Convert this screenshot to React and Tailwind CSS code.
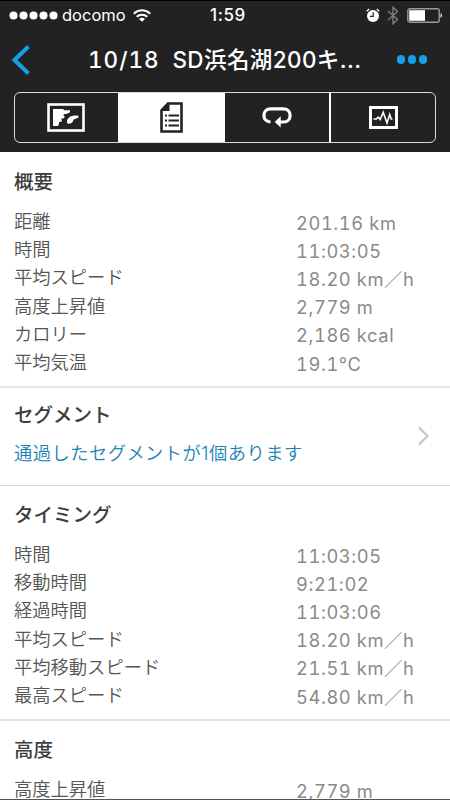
import clsx from "clsx";

const SUMMARY = [
  ["距離", "201.16 km"],
  ["時間", "11:03:05"],
  ["平均スピード", "18.20 km／h"],
  ["高度上昇値", "2,779 m"],
  ["カロリー", "2,186 kcal"],
  ["平均気温", "19.1°C"],
];

const TIMING = [
  ["時間", "11:03:05"],
  ["移動時間", "9:21:02"],
  ["経過時間", "11:03:06"],
  ["平均スピード", "18.20 km／h"],
  ["平均移動スピード", "21.51 km／h"],
  ["最高スピード", "54.80 km／h"],
];

const ELEVATION = [["高度上昇値", "2,779 m"]];

const MapIcon = () => (
  <svg width="38" height="29" viewBox="0 0 38 29">
    <rect x="1.5" y="1.5" width="35" height="26" fill="none" stroke="#fff" strokeWidth="2.6" />
    <path d="M6 6h10l1.5 1.2H23v2l-3 1.5-3 .5-.6 1.2 1.4 1.3-1 1.5-2.8.5 1 1.6-.7 1.4-2.3.3v1.700L11 23H6z" fill="#fff" />
    <path d="M31.300 12.500v2.200l-4.500 1.800-1.700 3.200-3.700 1.300-1.600-1.500.5-3 2.800-2.900 4-1.100z" fill="#fff" />
  </svg>
);

const DocIcon = () => (
  <svg width="23" height="31" viewBox="0 0 23 31">
    <path d="M1.500 8.500L8 1.500h13.500v28h-20z" fill="#fff" stroke="#222" strokeWidth="2.600" />
    <path d="M1 8L8 1h1.500v8H1z" fill="#222" />
    <path d="M5 13.500h2M8.500 13.500H19M5 18.500h2M8.500 18.500H19M5 23.500h2M8.500 23.500H19" stroke="#222" strokeWidth="2.200" />
  </svg>
);

const LoopIcon = () => (
  <svg width="30" height="21" viewBox="0 0 30 21">
    <path d="M8.500 15C4.500 14.700 1.900 12 1.900 8.400c0-3.800 2.800-6.500 6.800-6.500h12.600c4 0 6.800 2.700 6.800 6.500s-2.600 6.600-6.500 6.600H18" fill="none" stroke="#fff" strokeWidth="3.200" />
    <path d="M18.700 9.200v11.300L12.700 15z" fill="#fff" />
  </svg>
);

const GraphIcon = () => (
  <svg width="29" height="23" viewBox="0 0 29 23">
    <rect x="1.500" y="1.500" width="26" height="20" fill="none" stroke="#fff" strokeWidth="3" />
    <path d="M4.500 13h2.800l1.900-1.800 2 2.300 3-7.200 3.800 10.700 2.700-8.500 1.500 4.500h1.300" fill="none" stroke="#fff" strokeWidth="1.600" />
  </svg>
);

const TABS = [MapIcon, DocIcon, LoopIcon, GraphIcon];

function StatusBar() {
  return (
    <div className="flex h-[30px] items-center border-t border-black pl-[9px] pr-[7px] text-white">
      <div className="flex w-[201px] items-center">
        <div className="flex gap-[0.5px]">
          {[0, 1, 2, 3, 4].map((i) => (
            <span key={i} className="size-[9.4px] scale-90 rounded-full bg-white" />
          ))}
        </div>
        <span className="ml-[4px] text-[16.5px] leading-none">docomo</span>
        <svg className="ml-[7px]" width="18" height="13" viewBox="0 0 18 13">
          <g fill="none" stroke="#fff" strokeWidth="2">
            <path d="M.8 4.700C5.500.1 12.500.1 17.200 4.700" />
            <path d="M3.700 7.800c3-2.900 7.600-2.900 10.600 0" />
          </g>
          <path d="M9 12.800L6 9.900c1.700-1.500 4.300-1.500 6 0z" fill="#fff" />
        </svg>
      </div>
      <span className="text-[17px] font-medium leading-none tracking-[0.6px]">1:59</span>
      <div className="ml-auto flex items-center">
        <svg width="14" height="15" viewBox="0 0 14 15">
          <circle cx="7" cy="8" r="6" fill="#fff" />
          <path d="M.7 3.300L3.200 1M13.300 3.300L10.800 1" stroke="#fff" strokeWidth="1.200" />
          <path d="M7.200 4.300V8.300H4" fill="none" stroke="#222" strokeWidth="1.200" />
        </svg>
        <svg className="ml-[7px]" width="12" height="19" viewBox="0 0 12 19">
          <path d="M1 5l9.500 8.500L6 17.800V1.200l4.500 4.300L1 14" fill="none" stroke="#7d7d7d" strokeWidth="1.400" />
        </svg>
        <svg className="ml-[8px]" width="36" height="15" viewBox="0 0 36 15">
          <rect x=".8" y=".8" width="31.400" height="13.400" rx="2" fill="none" stroke="#999" strokeWidth="1.400" />
          <rect x="2.200" y="2.200" width="15.800" height="10.600" fill="#fff" />
          <path d="M33.500 5.200c2 .4 2 4.200 0 4.600z" fill="#ddd" />
        </svg>
      </div>
    </div>
  );
}

function NavBar() {
  return (
    <div className="flex h-[62px] items-center pl-[11px] pr-[23px]">
      <svg className="-mt-[3px]" width="20" height="30" viewBox="0 0 20 30">
        <path d="M17.500 1.500L3.500 15l14 13.500" fill="none" stroke="#12a0e8" strokeWidth="4" />
      </svg>
      <h1 className="-mt-[2px] ml-[57px] flex whitespace-pre text-[22.5px] font-medium leading-none text-white">
        <span className="tabular-nums tracking-[1px]">10/18</span>
        <span className="tracking-[0.4px]">  SD浜名湖200キ...</span>
      </h1>
      <div className="-mt-[4px] ml-auto flex gap-[3px]">
        <span className="h-[9px] w-[8px] rounded-full bg-[#12a0e8]" />
        <span className="h-[9px] w-[8px] rounded-full bg-[#12a0e8]" />
        <span className="h-[9px] w-[8px] rounded-full bg-[#12a0e8]" />
      </div>
    </div>
  );
}

function Rows({ items }) {
  return (
    <dl className="text-[18.3px]">
      {items.map(([label, value]) => (
        <div key={label} className="flex h-[28.2px] items-center leading-[28px]">
          <dt className="w-[282px] font-[350] text-[#555]">{label}</dt>
          <dd className="pt-[3px] tabular-nums tracking-[0.6px] text-[#8a8a8a]">{value}</dd>
        </div>
      ))}
    </dl>
  );
}

const Heading = ({ children }) => (
  <h2 className="text-[19.5px] font-medium leading-7 text-[#3c3c3c]">{children}</h2>
);

export default function App() {
  return (
    <div className="flex h-[800px] w-[450px] flex-col overflow-hidden border-b border-[#555] bg-white font-['Inter','Noto_Sans_CJK_JP',sans-serif] antialiased">
      <header className="h-[152px] shrink-0 bg-[#222]">
        <StatusBar />
        <NavBar />
        <div className="mx-[14px] grid h-[51px] grid-cols-[103px_107px_104px_1fr] overflow-hidden rounded-[6px] border-[1.5px] border-[#ddd]">
          {TABS.map((Icon, i) => (
            <button
              key={i}
              className={clsx(
                "flex items-center justify-center",
                i === 0 && "pr-[2px]",
                i === 1 && "bg-white",
                i === 3 && "border-l-2 border-white"
              )}
            >
              <Icon />
            </button>
          ))}
        </div>
      </header>

      <section className="h-[236px] shrink-0 border-b-2 border-[#e4e4e4] px-[14px] pt-[16px]">
        <Heading>概要</Heading>
        <div className="mt-[11px]">
          <Rows items={SUMMARY} />
        </div>
      </section>

      <section className="flex h-[98px] shrink-0 items-center border-b border-[#d8d8d8] pb-[6px] pl-[14px] pr-[20px]">
        <div className="flex-1">
          <Heading>セグメント</Heading>
          <p className="mt-[10px] text-[18.3px] font-[350] leading-7 tracking-[0.45px] text-[#1b83b5]">
            通過したセグメントが1個あります
          </p>
        </div>
        <svg className="mt-[4px]" width="13" height="20" viewBox="0 0 13 20">
          <path d="M2 1.500l8.500 8.500L2 18.500" fill="none" stroke="#c7c7cc" strokeWidth="2.400" />
        </svg>
      </section>

      <section className="h-[235px] shrink-0 border-b-2 border-[#e4e4e4] px-[14px] pt-[15px]">
        <Heading>タイミング</Heading>
        <div className="mt-[11px]">
          <Rows items={TIMING} />
        </div>
      </section>

      <section className="px-[14px] pt-[15px]">
        <Heading>高度</Heading>
        <div className="mt-[11px]">
          <Rows items={ELEVATION} />
        </div>
      </section>
    </div>
  );
}
